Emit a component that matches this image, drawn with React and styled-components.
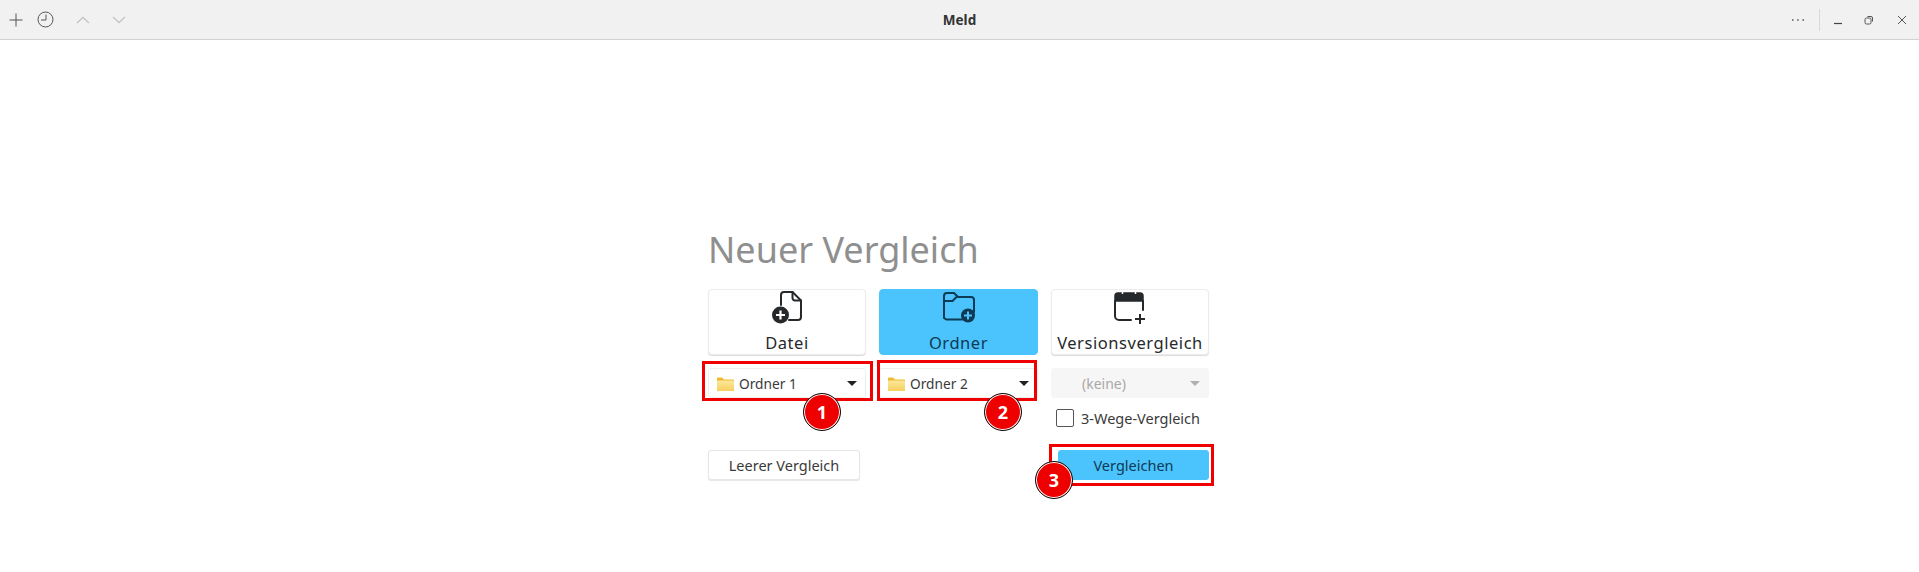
import React from "react";
import styled, { createGlobalStyle } from "styled-components";

const Global = createGlobalStyle`
  html, body { margin: 0; padding: 0; background: #fff; }
  body { font-family: "Noto Sans", "Open Sans", sans-serif; color: #2e3436; }
`;
const Page = styled.div`width: 1919px; height: 572px; display: flex; flex-direction: column; overflow: hidden; background: #fff;`;
const Header = styled.header`
  height: 39px; flex: none; display: grid; grid-template-columns: 1fr auto 1fr; align-items: center; background: #f1f1f1;
  border-bottom: 1px solid #d2d2d2;
`;
const HeaderGroup = styled.div`display: flex; align-items: center; justify-content: ${p => p.$end ? "flex-end" : "flex-start"};`;
const HeaderButton = styled.div`
  width: 24px; height: 24px; display: flex; align-items: center; justify-content: center;
  margin-left: ${p => p.$ml || 0}px; margin-right: ${p => p.$mr || 0}px;
  svg { display: block; }
`;
const Title = styled.div`text-align: center; font-size: 13.5px; font-weight: 700; color: #333;`;
const Sep = styled.div`width: 1px; height: 22px; background: #d8d8d8; margin: 0 6px 0 9px;`;
const Content = styled.main`
  width: 501px; margin: 0 0 0 708px; padding-top: 185px; display: flex; flex-direction: column;
`;
const Heading = styled.h1`
  margin: 0; font-size: 36px; line-height: 50px; height: 64px; font-weight: 400; color: #8f8f8f;
`;
const Grid = styled.div`display: grid; grid-template-columns: 158px 159px 158px; column-gap: 13px; position: relative;`;
const Card = styled.div`
  height: 66px; box-sizing: border-box; border-radius: 4px; display: flex; flex-direction: column; align-items: center;
  background: ${p => p.$active ? "#4bc3fd" : "#fff"};
  color: ${p => p.$active ? "#0d3a54" : "#26292b"};
  border: 1px solid ${p => p.$active ? "#4bc3fd" : "#ececec"};
  box-shadow: 0 1px 1px rgba(0,0,0,${p => p.$active ? 0 : 0.14});
  font-size: 16.500px; line-height: 22px; letter-spacing: 0.55px;
  svg { margin-top: 0; height: 34px; flex: none; }
  span { margin-top: 8px; white-space: nowrap; }
`;
const Column = styled.div`display: flex; flex-direction: column;`;
const Select = styled.div`
  height: 30px; box-sizing: border-box; margin-top: 13px; position: relative; border-radius: 3px; display: flex; align-items: center;
  padding: 1px 8px 0 8px; font-size: ${p => p.$disabled ? 14 : 13.7}px;
  background: ${p => p.$disabled ? "#f6f6f6" : "#fff"};
  color: ${p => p.$disabled ? "#a8a8a8" : "#3a3a3a"};
  border: 1px solid ${p => p.$disabled ? "#f6f6f6" : "#eee"};
`;
const SelectText = styled.span`flex: 1; margin-left: 5px; ${p => p.$center && "text-align: center; margin-left: 0; padding-right: 42px;"}`;
const Caret = styled.i`
  width: 0; height: 0; border-left: 5.5px solid transparent; border-right: 5.5px solid transparent;
  border-top: 5.5px solid ${p => p.$disabled ? "#b0b0b0" : "#222"};
`;
const CheckRow = styled.label`display: flex; align-items: center; margin: 11px 0 0 5px; height: 18px; font-size: 14.500px; color: #3a3a3a;`;
const Box = styled.span`width: 16px; height: 16px; border: 1px solid #555; border-radius: 2px; background: #fff; margin-right: 7px;`;
const Footer = styled.div`display: flex; align-items: flex-start; margin-top: ${p => p.$mt}px; margin-left: ${p => p.$ml || 0}px;`;
const Button = styled.div`
  height: 30px; width: 152px; box-sizing: border-box; display: flex; align-items: center; justify-content: center; border-radius: 3px;
  font-size: 14.500px; position: relative;
  background: ${p => p.$primary ? "#4bc3fd" : "#fff"};
  color: ${p => p.$primary ? "#0d3a54" : "#3a3a3a"};
  border: 1px solid ${p => p.$primary ? "#4bc3fd" : "#e6e6e6"};
  box-shadow: ${p => p.$primary ? "none" : "0 1px 1px rgba(0,0,0,.1)"};
`;
const RedFrame = styled.div`
  position: absolute; border: 3px solid #f00000; box-sizing: border-box; pointer-events: none;
  left: ${p => p.$l}px; right: ${p => p.$r}px; top: ${p => p.$t}px; bottom: ${p => p.$b}px;
`;
const Badge = styled.div`
  position: absolute; width: 38px; height: 38px; box-sizing: border-box; border-radius: 50%; background: #ee0000;
  border: 1px solid #111; box-shadow: inset 0 0 0 1px #fff; color: #fff; font-weight: 700; font-size: 18px;
  display: flex; align-items: center; justify-content: center; left: ${p => p.$x}px; top: ${p => p.$y}px;
`;

const stroke = { fill: "none", stroke: "currentColor", strokeWidth: 2, strokeLinecap: "round", strokeLinejoin: "round" };
const Folder = () => (
  <svg width="17" height="14" viewBox="0 0 17 14">
    <defs><linearGradient id="fg" x1="0" y1="0" x2="0" y2="1"><stop offset="0" stopColor="#fce89a" /><stop offset="1" stopColor="#f7cf5f" /></linearGradient></defs>
    <path d="M0 1.500A1 1 0 0 1 1 .5h4l2 2h9a1 1 0 0 1 1 1V13a1 1 0 0 1-1 1H1a1 1 0 0 1-1-1z" fill="#efb92f" />
    <rect x="0" y="3.500" width="17" height="10.500" rx="1" fill="url(#fg)" />
  </svg>
);
const FileIcon = () => (
  <svg width="34" height="34" viewBox="0 0 34 34">
    <path d="M11 15V5a3 3 0 0 1 3-3h8.500L31 10.500V27a3 3 0 0 1-3 3h-9" {...stroke} />
    <path d="M22.500 2v6a2.500 2.500 0 0 0 2.500 2.500H31" {...stroke} />
    <circle cx="10.500" cy="25" r="8.500" fill="currentColor" />
    <path d="M10.500 20.500v9M6 25h9" stroke="#fff" strokeWidth="2.200" />
  </svg>
);
const FolderIcon = () => (
  <svg width="34" height="34" viewBox="0 0 34 34">
    <path d="M2 28V6a3 3 0 0 1 3-3h7l4 4h13a3 3 0 0 1 3 3v12M2 11h8.500l4-4M20 29.500H5a3 3 0 0 1-3-3" {...stroke} />
    <circle cx="26" cy="25.500" r="7" fill="currentColor" />
    <path d="M26 21.500v8M22 25.500h8" stroke="#4bc3fd" strokeWidth="2" />
  </svg>
);
const CalendarIcon = () => (
  <svg width="34" height="34" viewBox="0 0 34 34">
    <path d="M2 11V6a3 3 0 0 1 3-3h22a3 3 0 0 1 3 3v5z" fill="currentColor" stroke="currentColor" strokeWidth="1.500" />
    <path d="M9.500 1v3M22.500 1v3" stroke="#fff" strokeWidth="1.500" />
    <path d="M2 11v15a4 4 0 0 0 4 4h12M30 11v9" {...stroke} />
    <path d="M27 24v10M22 29h10" stroke="currentColor" strokeWidth="2" />
  </svg>
);
const H = { fill: "none", stroke: "#555", strokeWidth: 1 };
const D = { fill: "none", stroke: "#c4c4c4", strokeWidth: 1.300 };

export default function App() {
  return (
    <Page>
      <Global />
      <Header>
        <HeaderGroup>
          <HeaderButton $ml={4}><svg width="16" height="16" viewBox="0 0 16 16"><path d="M8 1.500v13M1.500 8h13" {...H} /></svg></HeaderButton>
          <HeaderButton $ml={5}><svg width="17" height="17" viewBox="0 0 17 17"><circle cx="8.500" cy="8.500" r="7.500" {...H} /><path d="M9 3.500V9H4" {...H} /></svg></HeaderButton>
          <HeaderButton $ml={14}><svg width="16" height="10" viewBox="0 0 16 10"><path d="M2 8l6-5.500L14 8" {...D} /></svg></HeaderButton>
          <HeaderButton $ml={12}><svg width="16" height="10" viewBox="0 0 16 10"><path d="M2 2l6 5.500L14 2" {...D} /></svg></HeaderButton>
        </HeaderGroup>
        <Title>Meld</Title>
        <HeaderGroup $end>
          <HeaderButton><svg width="14" height="4" viewBox="0 0 14 4"><path d="M1 2h1.500M6.200 2h1.500M11.500 2H13" stroke="#555" strokeWidth="1.500" /></svg></HeaderButton>
          <Sep />
          <HeaderButton><svg width="10" height="10" viewBox="0 0 10 10"><path d="M1 8.500h8" stroke="#444" strokeWidth="1.200" /></svg></HeaderButton>
          <HeaderButton $ml={7}><svg width="10" height="10" viewBox="0 0 10 10"><rect x="1" y="3" width="6" height="6" rx="1.500" {...H} /><path d="M3.500 1.500h3.500a1.500 1.500 0 0 1 1.500 1.500v3.500" {...H} /></svg></HeaderButton>
          <HeaderButton $ml={9} $mr={5}><svg width="10" height="10" viewBox="0 0 10 10"><path d="M1 1l8 8M9 1l-8 8" {...H} /></svg></HeaderButton>
        </HeaderGroup>
      </Header>
      <Content>
        <Heading>Neuer Vergleich</Heading>
        <Grid>
          <Column>
            <Card><FileIcon /><span>Datei</span></Card>
            <Select>
              <Folder /><SelectText>Ordner 1</SelectText><Caret />
              <RedFrame $l={-7} $r={-8} $t={-8} $b={-4} />
              <Badge $x={94} $y={24}>1</Badge>
            </Select>
            <Footer $mt={52}><Button>Leerer Vergleich</Button></Footer>
          </Column>
          <Column>
            <Card $active><FolderIcon /><span>Ordner</span></Card>
            <Select>
              <Folder /><SelectText>Ordner 2</SelectText><Caret />
              <RedFrame $l={-3} $r={0} $t={-9} $b={-4} />
              <Badge $x={104} $y={24}>2</Badge>
            </Select>
          </Column>
          <Column>
            <Card><CalendarIcon /><span>Versionsvergleich</span></Card>
            <Select $disabled><SelectText $center>(keine)</SelectText><Caret $disabled /></Select>
            <CheckRow><Box />3-Wege-Vergleich</CheckRow>
            <Footer $mt={23} $ml={7}>
              <Button $primary>
                Vergleichen
                <RedFrame $l={-10} $r={-6} $t={-7} $b={-7} />
                <Badge $x={-24} $y={10}>3</Badge>
              </Button>
            </Footer>
          </Column>
        </Grid>
      </Content>
    </Page>
  );
}
